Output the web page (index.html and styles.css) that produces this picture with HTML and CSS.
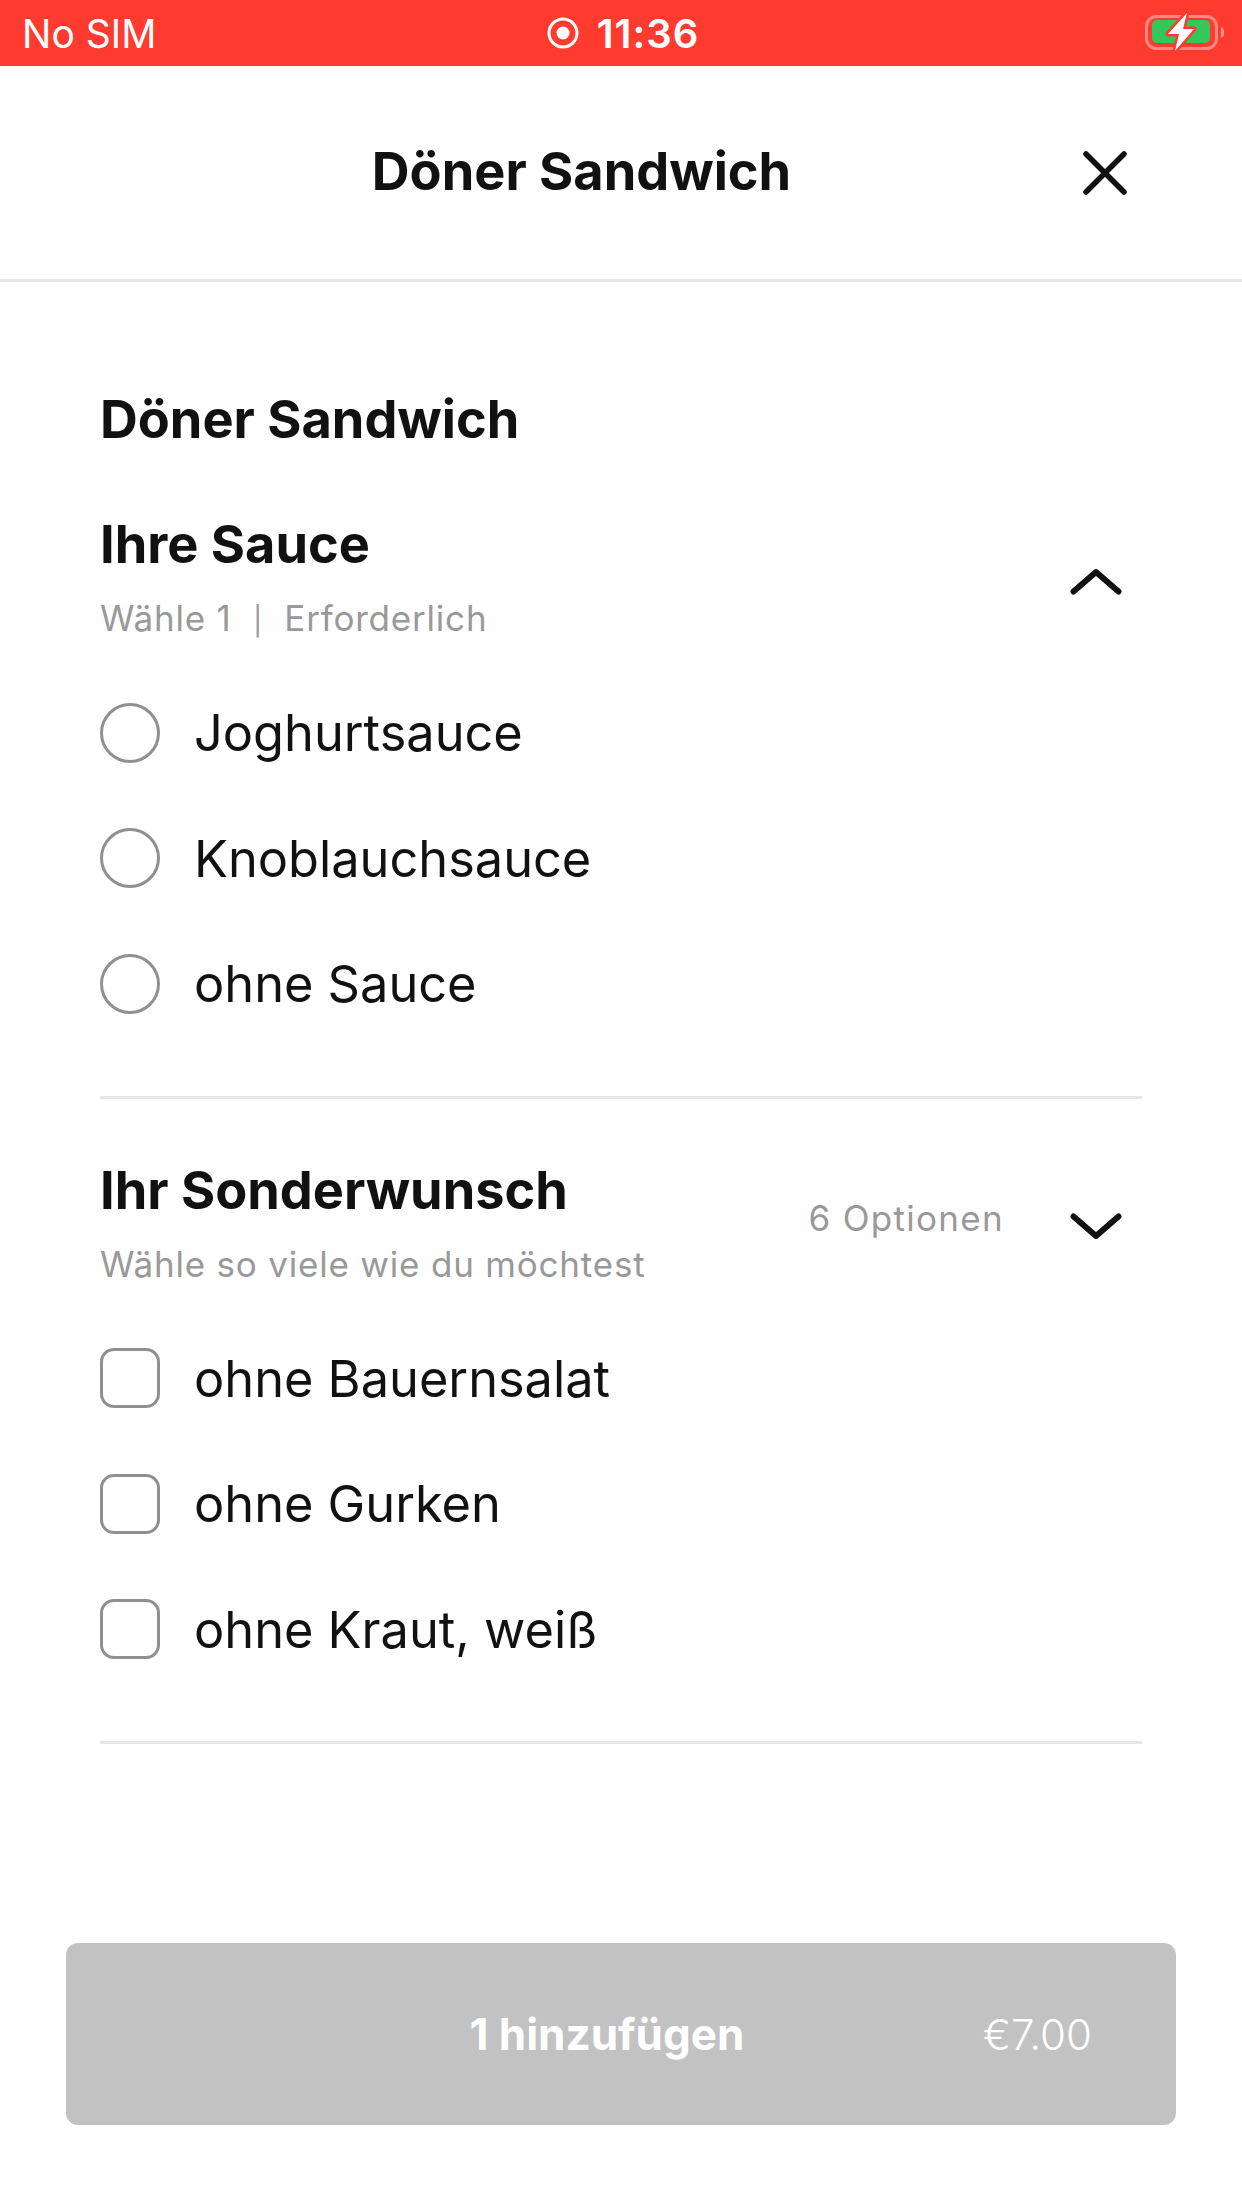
FILE: index.html
```html
<!DOCTYPE html>
<html lang="de">
<head>
<meta charset="utf-8">
<title>Döner Sandwich</title>
<link rel="stylesheet" href="styles.css">
</head>
<body>
<div class="page">
  <div class="status">
    <span class="carrier">No SIM</span>
    <span class="clock">
      <svg class="rec" viewBox="0 0 32 32" aria-hidden="true"><circle cx="16" cy="16" r="14" fill="none" stroke="#fff" stroke-width="3"/><circle cx="16" cy="16" r="6.500" fill="#fff"/></svg>
      <span class="time">11:36</span>
    </span>
    <svg class="battery" viewBox="0 0 84 44" aria-hidden="true">
      <rect x="4.500" y="5.500" width="70" height="32" rx="10" fill="none" stroke="#ffffff" stroke-opacity=".4" stroke-width="3"/>
      <path d="M79 16c2.500 .5 3 3 3 5.500s-.5 5-3 5.500z" fill="#fff" fill-opacity=".45"/>
      <rect x="10" y="9" width="58" height="23" rx="5" fill="#34c759"/>
      <path d="M45 2 L26 23 H37 L33 40 L52 18 H41 Z" fill="#fff" stroke="#ff3b30" stroke-width="5" stroke-linejoin="round" paint-order="stroke"/>
    </svg>
  </div>
  <header class="topbar">
    <div class="top-title">Döner Sandwich</div>
    <svg class="close" viewBox="0 0 44 44" aria-hidden="true"><path d="M3 3 L41 41 M41 3 L3 41" stroke="#111" stroke-width="5.500" stroke-linecap="round" fill="none"/></svg>
  </header>
  <main class="content">
    <h1 class="item-name">Döner Sandwich</h1>
    <section class="group first">
      <div class="group-head">
        <div class="group-text">
          <h2 class="group-title">Ihre Sauce</h2>
          <p class="group-sub">Wähle 1&nbsp; <span class="pipe">|</span> &nbsp;Erforderlich</p>
        </div>
        <svg class="chev" viewBox="0 0 52 30" aria-hidden="true"><path d="M3.500 25.500 L26 6 L48.500 25.500" stroke="#111" stroke-width="6" stroke-linecap="round" stroke-linejoin="round" fill="none"/></svg>
      </div>
      <ul class="options">
        <li class="option"><span class="radio"></span><span class="opt-label">Joghurtsauce</span></li>
        <li class="option"><span class="radio"></span><span class="opt-label">Knoblauchsauce</span></li>
        <li class="option"><span class="radio"></span><span class="opt-label">ohne Sauce</span></li>
      </ul>
    </section>
    <section class="group">
      <div class="group-head">
        <div class="group-text">
          <h2 class="group-title">Ihr Sonderwunsch</h2>
          <p class="group-sub">Wähle so viele wie du möchtest</p>
        </div>
        <span class="count">6 Optionen</span>
        <svg class="chev" viewBox="0 0 52 30" aria-hidden="true"><path d="M3.500 4.500 L26 24 L48.500 4.500" stroke="#111" stroke-width="6" stroke-linecap="round" stroke-linejoin="round" fill="none"/></svg>
      </div>
      <ul class="options">
        <li class="option"><span class="check"></span><span class="opt-label">ohne Bauernsalat</span></li>
        <li class="option"><span class="check"></span><span class="opt-label">ohne Gurken</span></li>
        <li class="option"><span class="check"></span><span class="opt-label">ohne Kraut, weiß</span></li>
      </ul>
    </section>
  </main>
  <footer class="footer">
    <div class="add">
      <span class="add-label">1 hinzufügen</span>
      <span class="add-price">€7.00</span>
    </div>
  </footer>
</div>
</body>
</html>
```
FILE: styles.css
```css
* { box-sizing: border-box; }
html, body { margin: 0; padding: 0; background: #fff; }
.page {
  width: 1242px;
  height: 2208px;
  display: flex;
  flex-direction: column;
  font-family: Inter, "Liberation Sans", sans-serif;
  color: #111;
  overflow: hidden;
}
.status {
  height: 66px;
  flex: none;
  background: #ff3b30;
  color: #fff;
  display: grid;
  grid-template-columns: 1fr auto 1fr;
  align-items: center;
  padding: 0 16px 0 22px;
}
.carrier { font-size: 39px; font-weight: 400; }
.clock { display: flex; align-items: center; gap: 18px; margin-left: -2px; }
.rec { width: 32px; height: 32px; }
.time { font-size: 40px; font-weight: 600; letter-spacing: 1px; }
.battery { width: 84px; height: 44px; justify-self: end; }
.topbar {
  height: 216px;
  flex: none;
  display: flex;
  align-items: center;
  padding: 0 115px 0 80px;
  border-bottom: 3px solid #e6e6e6;
}
.top-title {
  flex: 1;
  text-align: center;
  font-size: 52.300px;
  font-weight: 700;
  position: relative;
  top: -2px;
}
.close { width: 44px; height: 44px; flex: none; }
.content { flex: 1; padding: 107px 100px 0; }
.item-name { margin: 0; font-size: 52.300px; line-height: 60px; font-weight: 700; }
.group { padding-top: 61px; border-bottom: 3px solid #e6e6e6; }
.group.first { padding-top: 65px; }
.group-head { display: flex; align-items: center; padding-right: 20px; }
.group-text { flex: 1; }
.group-title { margin: 0; font-size: 52.300px; line-height: 60px; font-weight: 700; }
.group-sub { margin: 22px 0 0; font-size: 35px; line-height: 44px; color: #999; letter-spacing: 0.800px; }
.pipe { font-size: 28px; line-height: 0; }
.count { font-size: 35px; color: #999; letter-spacing: 1.300px; margin-right: 66px; margin-top: -10px; }
.chev { width: 52px; height: 30px; flex: none; margin-top: 8px; }
.options { list-style: none; margin: 30px 0 49px; padding: 0; }
.option { height: 125.500px; display: flex; align-items: center; gap: 34px; }
.radio { width: 60px; height: 60px; flex: none; border-radius: 50%; border: 3px solid #909090; }
.check { width: 60px; height: 60px; flex: none; border-radius: 14px; border: 3px solid #909090; }
.opt-label { font-size: 50.500px; font-weight: 400; }
.footer { flex: none; padding: 0 66px 83px; }
.add {
  height: 182px;
  background: #c2c2c2;
  border-radius: 12px;
  color: #fff;
  display: flex;
  align-items: center;
  padding: 0 84px 0 165px;
}
.add-label { flex: 1; text-align: center; font-size: 44px; font-weight: 700; }
.add-price { font-size: 42px; font-weight: 300; }
```
